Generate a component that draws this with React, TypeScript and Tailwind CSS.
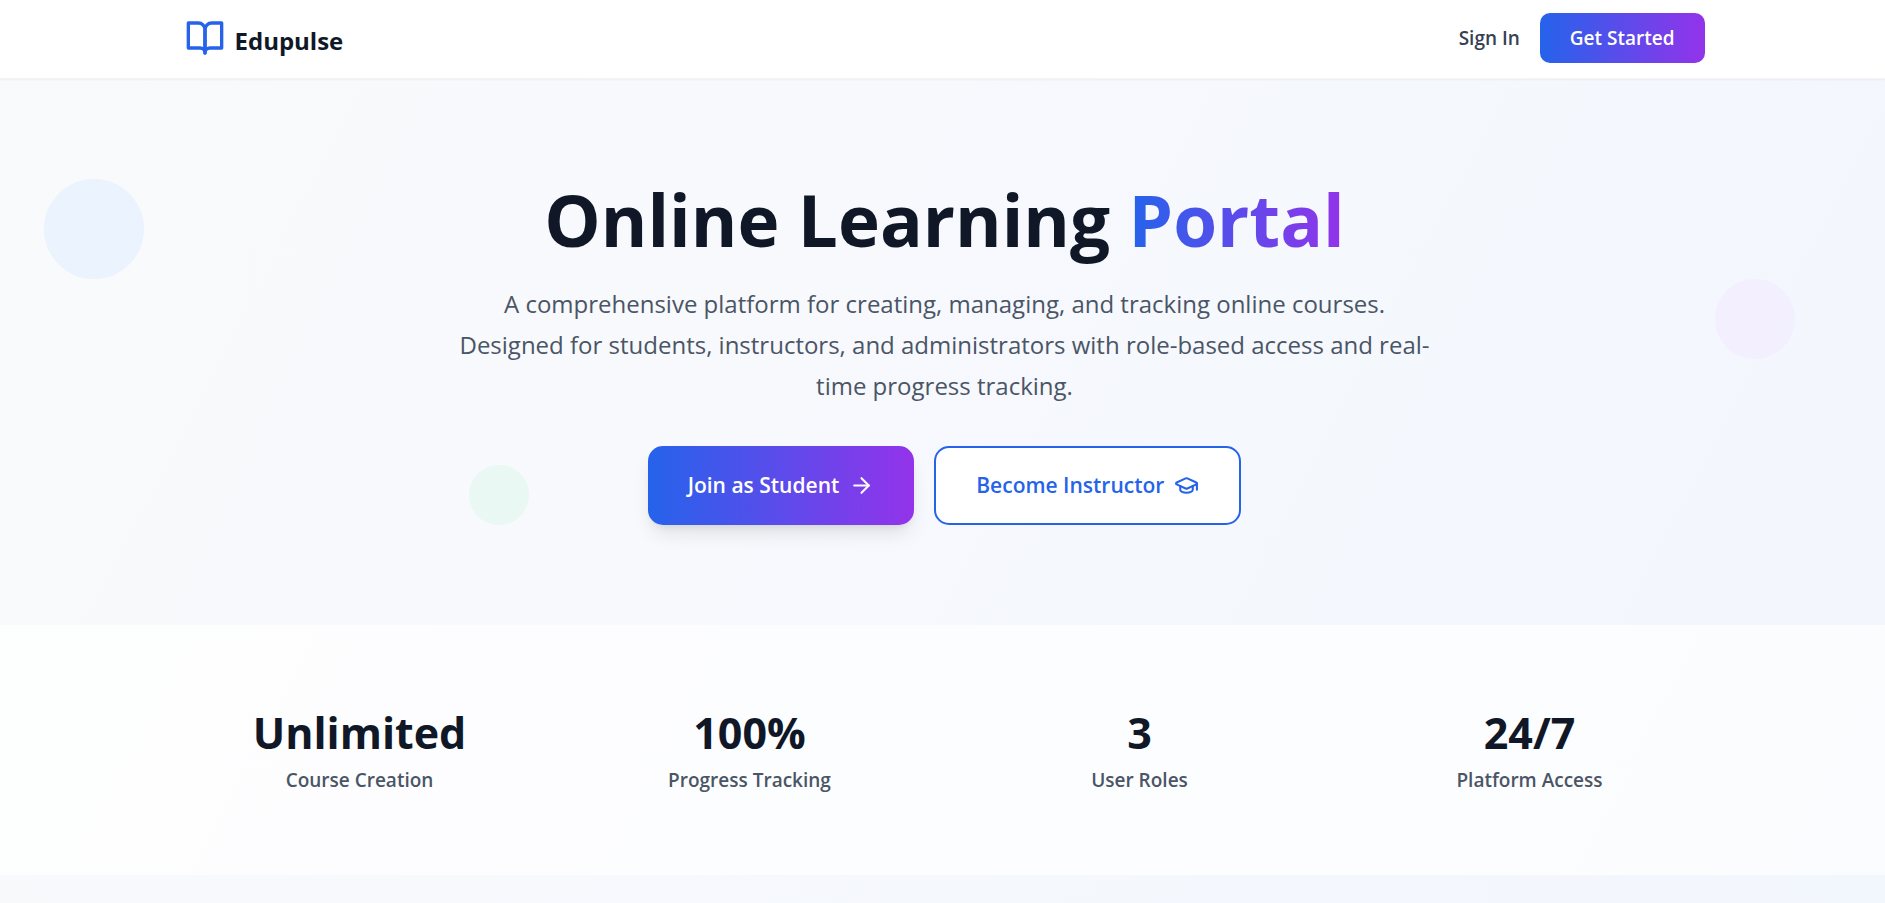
import { ArrowRight, GraduationCap } from "lucide-react";

const stats = [
  { value: "Unlimited", label: "Course Creation" },
  { value: "100%", label: "Progress Tracking" },
  { value: "3", label: "User Roles" },
  { value: "24/7", label: "Platform Access" },
];

function OpenBook() {
  return (
    <svg viewBox="0 0 24 24" className="size-10 text-[#2563eb]" fill="none" stroke="currentColor" strokeWidth={2} strokeLinecap="round" strokeLinejoin="round" aria-hidden="true">
      <path d="M2 3h6a4 4 0 0 1 4 4v14a3 3 0 0 0-3-3H2z" />
      <path d="M22 3h-6a4 4 0 0 0-4 4v14a3 3 0 0 1 3-3h7z" />
    </svg>
  );
}

export default function App() {
  return (
    <div className="relative min-h-screen overflow-hidden bg-[linear-gradient(117deg,#f9fafb,#f7f9fd_40%,#f2f6fd)] font-['Open_Sans',sans-serif] text-gray-900">
      <nav className="border-b border-gray-100 bg-white/95 pl-1 shadow-xs">
        <div className="mx-auto flex h-[78px] max-w-[1600px] items-center justify-between px-10 pb-[2px]">
          <a href="#home" className="flex items-center gap-[10px]">
            <OpenBook />
            <span className="pt-1 text-[24px] leading-[35px] font-bold">Edupulse</span>
          </a>
          <div className="flex items-center gap-5">
            <a href="#signin" className="text-[19px] font-semibold text-gray-700">Sign In</a>
            <button type="button" className="h-[50px] rounded-[10px] bg-linear-to-r/srgb from-[#2563eb] to-[#9333ea] px-[30px] text-[19px] font-semibold text-white">
              Get Started
            </button>
          </div>
        </div>
      </nav>

      <section className="relative py-[100px] pl-1">
        <div className="absolute top-[100px] left-11 size-[100px] rounded-full bg-[#ddecff]/50" />
        <div className="absolute top-[200px] right-[90px] size-20 rounded-full bg-[#f1e8ff]/50" />
        <div className="absolute bottom-[100px] left-[469px] size-[60px] rounded-full bg-[#dcf8e9]/50" />
        <div className="relative mx-auto max-w-[980px] text-center">
          <h1 className="text-[71px] leading-[82px] font-bold">
            Online Learning{" "}
            <span className="bg-linear-to-r/srgb from-[#2563eb] to-[#9333ea] bg-clip-text text-transparent">Portal</span>
          </h1>
          <p className="mt-[22px] text-[24px] leading-[41px] text-gray-600">
            A comprehensive platform for creating, managing, and tracking online courses. Designed for students, instructors, and administrators with role-based access and real-time progress tracking.
          </p>
          <div className="mt-10 flex justify-center gap-5">
            <button type="button" className="flex h-[79px] items-center gap-[10px] rounded-[15px] bg-linear-to-r/srgb from-[#2563eb] to-[#9333ea] px-10 text-[21px] font-semibold text-white shadow-[0_12px_19px_-4px_rgba(0,0,0,0.1),0_5px_8px_-5px_rgba(0,0,0,0.1)]">
              Join as Student
              <ArrowRight className="size-[25px]" />
            </button>
            <button type="button" className="flex h-[79px] items-center gap-[10px] rounded-[15px] border-2 border-[#2563eb] bg-white px-10 text-[21px] font-semibold text-[#2563eb]">
              Become Instructor
              <GraduationCap className="size-[25px]" />
            </button>
          </div>
        </div>
      </section>

      <section className="bg-white/70 py-20 pl-1">
        <div className="mx-auto grid max-w-[1600px] grid-cols-4 gap-10 px-10">
          {stats.map((stat) => (
            <div key={stat.label} className="text-center">
              <div className="text-[43px] leading-[56px] font-bold">{stat.value}</div>
              <div className="mt-1 text-[19px] leading-[30px] font-semibold text-gray-600">{stat.label}</div>
            </div>
          ))}
        </div>
      </section>
    </div>
  );
}
